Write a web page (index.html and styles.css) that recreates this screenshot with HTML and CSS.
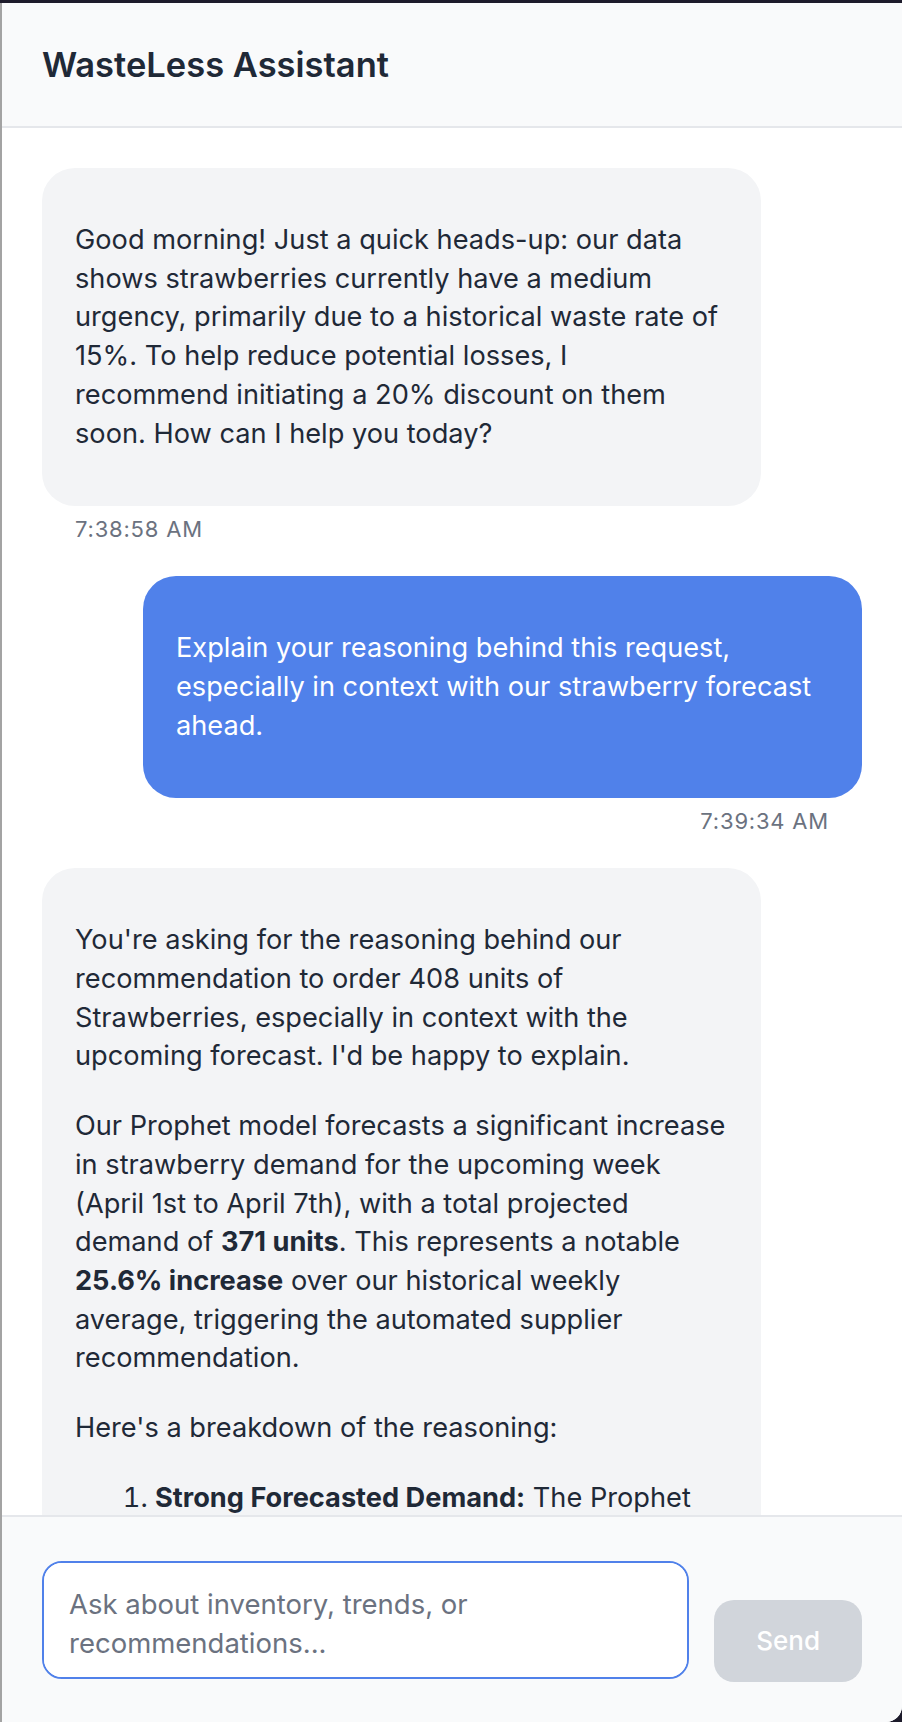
FILE: index.html
```html
<!DOCTYPE html>
<html lang="en">
<head>
    <meta charset="UTF-8">
    <meta name="viewport" content="width=device-width, initial-scale=1.0">
    <title>WasteLess Assistant</title>
    <link rel="stylesheet" href="styles.css">
</head>
<body>
    <div class="chat-panel">
        <header class="chat-header">
            <h2>WasteLess Assistant</h2>
        </header>

        <div class="chat-messages" id="messages">
            <div class="message bot">
                <div class="bubble">
                    <p>Good morning! Just a quick heads-up: our data shows strawberries currently have a medium urgency, primarily due to a historical waste rate of 15%. To help reduce potential losses, I recommend initiating a 20% discount on them soon. How can I help you today?</p>
                </div>
                <span class="time">7:38:58 AM</span>
            </div>

            <div class="message user">
                <div class="bubble">
                    <p>Explain your reasoning behind this request, especially in context with our strawberry forecast ahead.</p>
                </div>
                <span class="time">7:39:34 AM</span>
            </div>

            <div class="message bot">
                <div class="bubble">
                    <p>You're asking for the reasoning behind our recommendation to order 408 units of Strawberries, especially in context with the upcoming forecast. I'd be happy to explain.</p>
                    <p>Our Prophet model forecasts a significant increase in strawberry demand for the upcoming week (April 1st to April 7th), with a total projected demand of <strong>371 units</strong>. This represents a notable <strong>25.6% increase</strong> over our historical weekly average, triggering the automated supplier recommendation.</p>
                    <p>Here's a breakdown of the reasoning:</p>
                    <ol>
                        <li><strong>Strong Forecasted Demand:</strong> The Prophet model expects daily sales to stay above the usual level all week.</li>
                    </ol>
                </div>
                <span class="time">7:39:41 AM</span>
            </div>
        </div>

        <form class="chat-input" id="chat-form">
            <textarea id="chat-text" placeholder="Ask about inventory, trends, or recommendations..."></textarea>
            <button type="submit" id="send-button" disabled>Send</button>
        </form>
    </div>
    <script>
        const form = document.getElementById("chat-form");
        const input = document.getElementById("chat-text");
        const sendButton = document.getElementById("send-button");

        input.addEventListener("input", () => {
            sendButton.disabled = input.value.trim() === "";
        });

        form.addEventListener("submit", (e) => {
            e.preventDefault();
        });
    </script>
</body>
</html>
```

FILE: styles.css
```css
* {
    box-sizing: border-box;
}
body {
    margin: 0;
    padding: 3px 0 0 0;
    height: 100vh;
    overflow: hidden;
    background: #1d1b2b;
    font-family: 'Inter', 'Noto Sans', sans-serif;
    color: #1f2937;
}
.chat-panel {
    display: flex;
    flex-direction: column;
    height: 100%;
    background: #fff;
    border-left: 2px solid #a3a3a3;
    border-bottom-right-radius: 16px;
    overflow: hidden;
}
.chat-header {
    padding: 40px 40px;
    background: #f9fafb;
    border-bottom: 2px solid #e5e7eb;
}
.chat-header h2 {
    margin: 0;
    font-size: 34.5px;
    line-height: 43px;
    font-weight: 600;
    color: #1f2937;
}
.chat-messages {
    flex: 1;
    overflow-y: auto;
    scrollbar-width: none;
    padding: 40px 40px;
    display: flex;
    flex-direction: column;
    gap: 32px;
}
.message {
    display: flex;
    flex-direction: column;
    align-items: flex-start;
}
.message.user {
    align-items: flex-end;
}
.bubble {
    max-width: 719px;
    padding: 22px 33px;
    border-radius: 33px;
    background: #f3f4f6;
    font-size: 27.2px;
    line-height: 38.7px;
    color: #1f2937;
}
.message.user .bubble {
    background: #5081ea;
    color: #fff;
}
.bubble p {
    margin: 31px 0;
}
.bubble strong {
    font-weight: 700;
}
.bubble ol {
    margin: 31px 0;
    padding-left: 80px;
}
.time {
    margin-top: 8px;
    padding: 0 33px;
    font-size: 22px;
    line-height: 30px;
    letter-spacing: 0.8px;
    color: #6b7280;
}
.chat-input {
    display: flex;
    align-items: flex-end;
    gap: 25px;
    padding: 44px 40px 40px 40px;
    background: #f9fafb;
    border-top: 2px solid #e5e7eb;
}
.chat-input textarea {
    flex: 1;
    height: 118px;
    margin-bottom: 3px;
    padding: 22px 25px;
    border: 2px solid #5081ea;
    border-radius: 20px;
    resize: none;
    outline: none;
    font-family: inherit;
    font-size: 27.5px;
    line-height: 38.5px;
    color: #1f2937;
    background: #fff;
}
.chat-input textarea::placeholder {
    color: #6b7280;
}
#send-button {
    padding: 21px 42px;
    font-family: inherit;
    font-size: 26px;
    line-height: 40px;
    font-weight: 500;
    color: #fff;
    background: #d1d5db;
    border: none;
    border-radius: 20px;
}
```
